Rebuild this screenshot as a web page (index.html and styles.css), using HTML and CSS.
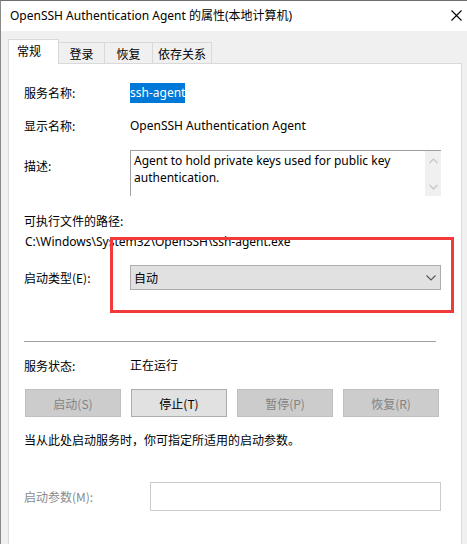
FILE: index.html
```html
<!DOCTYPE html>
<html lang="zh-CN">
<head>
<meta charset="utf-8">
<title>OpenSSH Authentication Agent 的属性(本地计算机)</title>
<link rel="stylesheet" href="styles.css">
</head>
<body>
<div class="window">
  <div class="titlebar">
    <span class="title">OpenSSH Authentication Agent 的属性(本地计算机)</span>
    <svg class="close" width="11" height="11" viewBox="0 0 11 11"><path d="M0.5 0.5 L10.5 10.5 M10.5 0.5 L0.5 10.5" stroke="#000" stroke-width="1.1" fill="none"/></svg>
  </div>
  <div class="body">
    <div class="tabs">
      <div class="tab active">常规</div>
      <div class="tab">登录</div>
      <div class="tab">恢复</div>
      <div class="tab">依存关系</div>
    </div>
    <div class="panel">
      <div class="row r1">
        <span class="label">服务名称:</span>
        <span class="value"><span class="sel">ssh-agent</span></span>
      </div>
      <div class="row r2">
        <span class="label">显示名称:</span>
        <span class="value">OpenSSH Authentication Agent</span>
      </div>
      <div class="row r3">
        <span class="label">描述:</span>
        <div class="textarea">
          <div class="ta-text">Agent to hold private keys used for public key authentication.</div>
          <div class="scroll">
            <svg width="9" height="6" viewBox="0 0 9 6"><path d="M0.5 5 L4.5 1 L8.5 5" stroke="#c4c4c4" stroke-width="1.2" fill="none"/></svg>
            <svg width="9" height="6" viewBox="0 0 9 6"><path d="M0.5 1 L4.5 5 L8.5 1" stroke="#c4c4c4" stroke-width="1.2" fill="none"/></svg>
          </div>
        </div>
      </div>
      <div class="row r4"><span class="label">可执行文件的路径:</span></div>
      <div class="row r5"><span class="path">C:\Windows\System32\OpenSSH\ssh-agent.exe</span></div>
      <div class="row r6">
        <span class="label">启动类型(E):</span>
        <div class="combo">
          <span>自动</span>
          <svg width="10" height="6" viewBox="0 0 10 6"><path d="M0.5 0.5 L5 5 L9.5 0.5" stroke="#555" stroke-width="1.1" fill="none"/></svg>
        </div>
      </div>
      <div class="sep"></div>
      <div class="row r7">
        <span class="label">服务状态:</span>
        <span class="value">正在运行</span>
      </div>
      <div class="buttons">
        <div class="btn disabled">启动(S)</div>
        <div class="btn">停止(T)</div>
        <div class="btn disabled">暂停(P)</div>
        <div class="btn disabled">恢复(R)</div>
      </div>
      <div class="row r8"><span class="note">当从此处启动服务时，你可指定所适用的启动参数。</span></div>
      <div class="row r9">
        <span class="label dim">启动参数(M):</span>
        <div class="input"></div>
      </div>
    </div>
  </div>
  <div class="highlight"></div>
</div>
</body>
</html>
```
FILE: styles.css
```css
html, body {
  margin: 0;
  padding: 0;
  background: #f0f0f0;
}
body {
  font-family: "Noto Sans", "Noto Sans CJK SC", sans-serif;
  font-size: 12px;
  color: #000;
}
.window {
  position: relative;
  width: 466px;
  height: 543px;
  border-top: 1px solid #6e6e6e;
  border-left: 1px solid #8a8a8a;
  overflow: hidden;
  background: #f0f0f0;
}
.titlebar {
  height: 30px;
  background: #fff;
  display: flex;
  align-items: center;
  justify-content: space-between;
  padding: 0 5px 0 9px;
}
.title {
  font-size: 12px;
  line-height: 16px;
}
.close {
  display: block;
  margin-top: -1px;
}
.body {
  padding: 9px 0 0 7px;
}
.tabs {
  display: flex;
  align-items: flex-end;
  height: 24px;
  position: relative;
  z-index: 1;
}
.tab {
  height: 21px;
  box-sizing: border-box;
  border: 1px solid #d9d9d9;
  border-left: none;
  border-bottom: none;
  background: #f0f0f0;
  display: flex;
  align-items: center;
  justify-content: center;
  font-family: "Noto Sans CJK SC", sans-serif;
  font-size: 12px;
  margin-bottom: 1px;
}
.tab:nth-child(2) { width: 46px; }
.tab:nth-child(3) { width: 48px; }
.tab:nth-child(4) { width: 59px; }
.tab.active {
  width: 51px;
  height: 25px;
  background: #fff;
  border-left: 1px solid #d9d9d9;
  margin-bottom: 0;
  padding-bottom: 3px;
  justify-content: flex-start;
  padding-left: 8px;
}
.panel {
  margin-top: -1px;
  width: 454px;
  height: 600px;
  box-sizing: border-box;
  background: #fff;
  border: 1px solid #d9d9d9;
  padding: 18px 0 0 15px;
}
.row {
  display: flex;
  align-items: center;
  height: 20px;
}
.label {
  width: 106px;
  flex: none;
  font-family: "Noto Sans CJK SC", sans-serif;
}
.label.dim { color: #8a8a8a; width: 126px; }
.value { white-space: nowrap; }
.sel {
  background: #0078d7;
  color: #fff;
  padding: 1px 0 2px;
}
.r2 { margin-top: 13px; }
.r3 {
  margin-top: 15px;
  height: 46px;
  align-items: flex-start;
}
.r3 .label { margin-top: 7px; }
.textarea {
  width: 311px;
  height: 46px;
  box-sizing: border-box;
  border-top: 1px solid #a0a0a0;
  border-left: 1px solid #a0a0a0;
  display: flex;
  justify-content: space-between;
}
.ta-text {
  width: 285px;
  padding: 1px 0 0 3px;
  line-height: 17px;
}
.scroll {
  width: 16px;
  background: #f0f0f0;
  display: flex;
  flex-direction: column;
  align-items: center;
  justify-content: space-between;
  padding: 7px 0 6px;
  box-sizing: border-box;
}
.scroll svg { display: block; }
.r4 { margin-top: 14px; }
.r5 { margin-top: 1px; }
.path { padding-left: 1px; white-space: nowrap; }
.r6 {
  margin-top: 14px;
  height: 25px;
}
.combo {
  width: 311px;
  height: 25px;
  box-sizing: border-box;
  background: #e1e1e1;
  border: 1px solid #adadad;
  display: flex;
  align-items: center;
  justify-content: space-between;
  padding: 0 4px 0 3px;
  font-family: "Noto Sans CJK SC", sans-serif;
}
.combo svg { display: block; }
.sep {
  margin-top: 51px;
  width: 412px;
  height: 1px;
  background: #a0a0a0;
}
.r7 { margin-top: 13px; }
.buttons {
  display: flex;
  gap: 10px;
  margin-top: 14px;
  padding-left: 1px;
}
.btn {
  width: 96px;
  height: 28px;
  box-sizing: border-box;
  background: #e1e1e1;
  border: 1px solid #adadad;
  display: flex;
  align-items: center;
  justify-content: center;
  font-family: "Noto Sans CJK SC", sans-serif;
}
.btn.disabled {
  background: #cccccc;
  border-color: #bfbfbf;
  color: #838383;
}
.r8 { margin-top: 12px; }
.note { font-family: "Noto Sans CJK SC", sans-serif; }
.r9 {
  margin-top: 33px;
  height: 29px;
}
.input {
  width: 291px;
  height: 29px;
  box-sizing: border-box;
  border: 1px solid #cccccc;
}
.highlight {
  position: absolute;
  left: 109px;
  top: 236px;
  width: 344px;
  height: 76px;
  box-sizing: border-box;
  border: 3px solid #f23a3a;
}
```
